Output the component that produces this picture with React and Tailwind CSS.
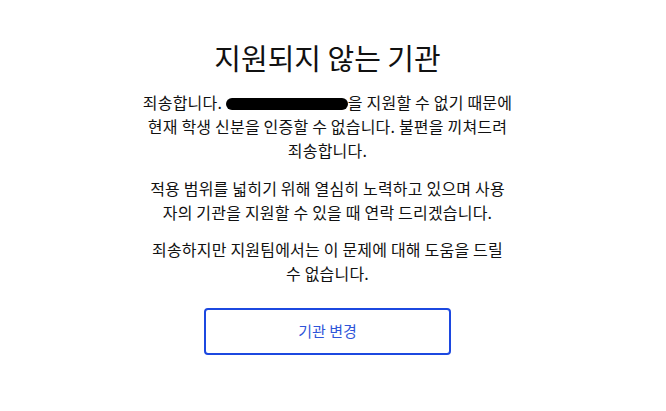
import React from 'react';

const FONT = { fontFamily: '"Noto Sans CJK KR", "Noto Sans", sans-serif' };

export default function App() {
  return (
    <div className="min-h-screen bg-white flex justify-center pr-[11px]" style={FONT}>
      <div className="w-[420px] pt-[38px] flex flex-col items-center text-center text-[#111]">
        <h1 className="text-[29px] leading-[38px] font-normal">지원되지 않는 기관</h1>

        <p className="mt-[14px] text-[16px] leading-[24px] tracking-[0.2px] whitespace-nowrap">
          죄송합니다.{' '}
          <span className="inline-block align-middle w-[122px] h-[12px] bg-black rounded-full -mt-[2px]" />
          을 지원할 수 없기 때문에
          <br />
          현재 학생 신분을 인증할 수 없습니다. 불편을 끼쳐드려
          <br />
          죄송합니다.
        </p>

        <p className="mt-[14px] text-[16px] leading-[24px] tracking-[0.2px] whitespace-nowrap">
          적용 범위를 넓히기 위해 열심히 노력하고 있으며 사용
          <br />
          자의 기관을 지원할 수 있을 때 연락 드리겠습니다.
        </p>

        <p className="mt-[13px] text-[16px] leading-[24px] tracking-[0.2px] whitespace-nowrap">
          죄송하지만 지원팀에서는 이 문제에 대해 도움을 드릴
          <br />
          수 없습니다.
        </p>

        <button className="mt-[23px] w-[247px] h-[47px] border-2 border-[#1c48e0] rounded-[4px] text-[#2f55d9] text-[15px]">
          기관 변경
        </button>
      </div>
    </div>
  );
}
